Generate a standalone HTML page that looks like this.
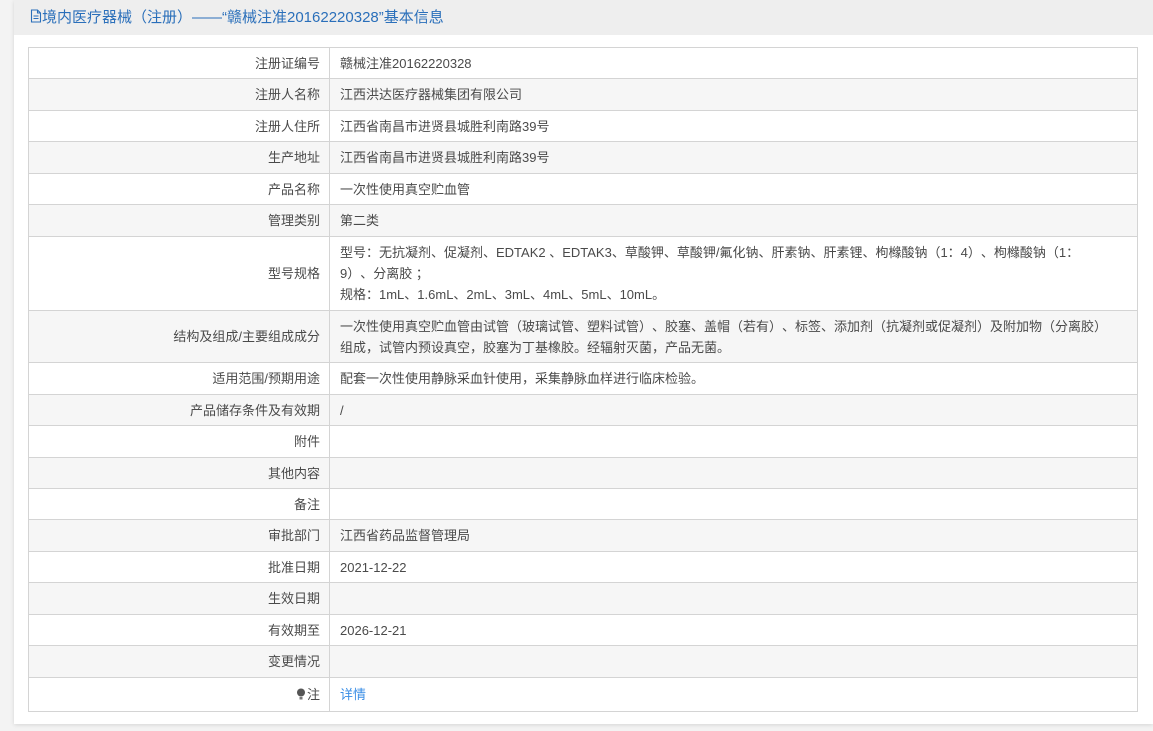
<!DOCTYPE html>
<html><head><meta charset="utf-8"><style>
html,body{margin:0;padding:0;background:#f3f3f3;width:1153px;height:731px;overflow:hidden;font-family:"Liberation Sans","Noto Sans CJK SC",sans-serif;text-spacing-trim:space-all;}
.panel{position:absolute;left:14px;top:0;width:1139px;height:724px;background:#fff;box-shadow:0 1px 4px rgba(0,0,0,.12);}
.hd{height:35px;background:#eeeeee;color:#2a6fba;font-size:15px;line-height:35px;padding-left:16px;}
table{position:absolute;left:14px;top:47px;width:1110px;border-collapse:collapse;font-size:13px;color:#4a4a4a;}
td{border:1px solid #d4d4d4;padding:0 10px;line-height:21px;}
td.l{width:281px;text-align:right;padding-right:9px;}
tr:nth-child(even) td{background:#f6f6f6;}
a{color:#3a8ee6;text-decoration:none;}
</style></head><body>
<div class="panel">
<div class="hd"><svg width="12" height="14" viewBox="0 0 12 14" style="vertical-align:-1px"><path d="M1.5 1h6l3 3v9h-9z M7.5 1v3h3 M3.5 7h5 M3.5 9.5h5" fill="none" stroke="#2a6fba" stroke-width="1.1"/></svg>境内医疗器械（注册）——“赣械注准20162220328”基本信息</div>
<table>
<tr style="height:31px"><td class="l">注册证编号</td><td>赣械注准20162220328</td></tr>
<tr style="height:32px"><td class="l">注册人名称</td><td>江西洪达医疗器械集团有限公司</td></tr>
<tr style="height:31px"><td class="l">注册人住所</td><td>江西省南昌市进贤县城胜利南路39号</td></tr>
<tr style="height:32px"><td class="l">生产地址</td><td>江西省南昌市进贤县城胜利南路39号</td></tr>
<tr style="height:31px"><td class="l">产品名称</td><td>一次性使用真空贮血管</td></tr>
<tr style="height:32px"><td class="l">管理类别</td><td>第二类</td></tr>
<tr style="height:74px"><td class="l">型号规格</td><td>型号：无抗凝剂、促凝剂、EDTAK2 、EDTAK3、草酸钾、草酸钾/氟化钠、肝素钠、肝素锂、枸橼酸钠（1：4）、枸橼酸钠（1：<br>9）、分离胶 ；<br>规格：1mL、1.6mL、2mL、3mL、4mL、5mL、10mL。</td></tr>
<tr style="height:52px"><td class="l">结构及组成/主要组成成分</td><td>一次性使用真空贮血管由试管（玻璃试管、塑料试管）、胶塞、盖帽（若有）、标签、添加剂（抗凝剂或促凝剂）及附加物（分离胶）<br>组成，试管内预设真空，胶塞为丁基橡胶。经辐射灭菌，产品无菌。</td></tr>
<tr style="height:32px"><td class="l">适用范围/预期用途</td><td>配套一次性使用静脉采血针使用，采集静脉血样进行临床检验。</td></tr>
<tr style="height:31px"><td class="l">产品储存条件及有效期</td><td>/</td></tr>
<tr style="height:32px"><td class="l">附件</td><td></td></tr>
<tr style="height:31px"><td class="l">其他内容</td><td></td></tr>
<tr style="height:31px"><td class="l">备注</td><td></td></tr>
<tr style="height:32px"><td class="l">审批部门</td><td>江西省药品监督管理局</td></tr>
<tr style="height:31px"><td class="l">批准日期</td><td>2021-12-22</td></tr>
<tr style="height:32px"><td class="l">生效日期</td><td></td></tr>
<tr style="height:31px"><td class="l">有效期至</td><td>2026-12-21</td></tr>
<tr style="height:32px"><td class="l">变更情况</td><td></td></tr>
<tr style="height:34px"><td class="l"><svg width="10" height="12" viewBox="0 0 10 12" style="vertical-align:-1px;margin-right:1px"><circle cx="5" cy="4.5" r="4" fill="#555"/><rect x="3.5" y="9" width="3" height="2.5" fill="#777"/></svg>注</td><td><a>详情</a></td></tr>
</table>
</div>
</body></html>
